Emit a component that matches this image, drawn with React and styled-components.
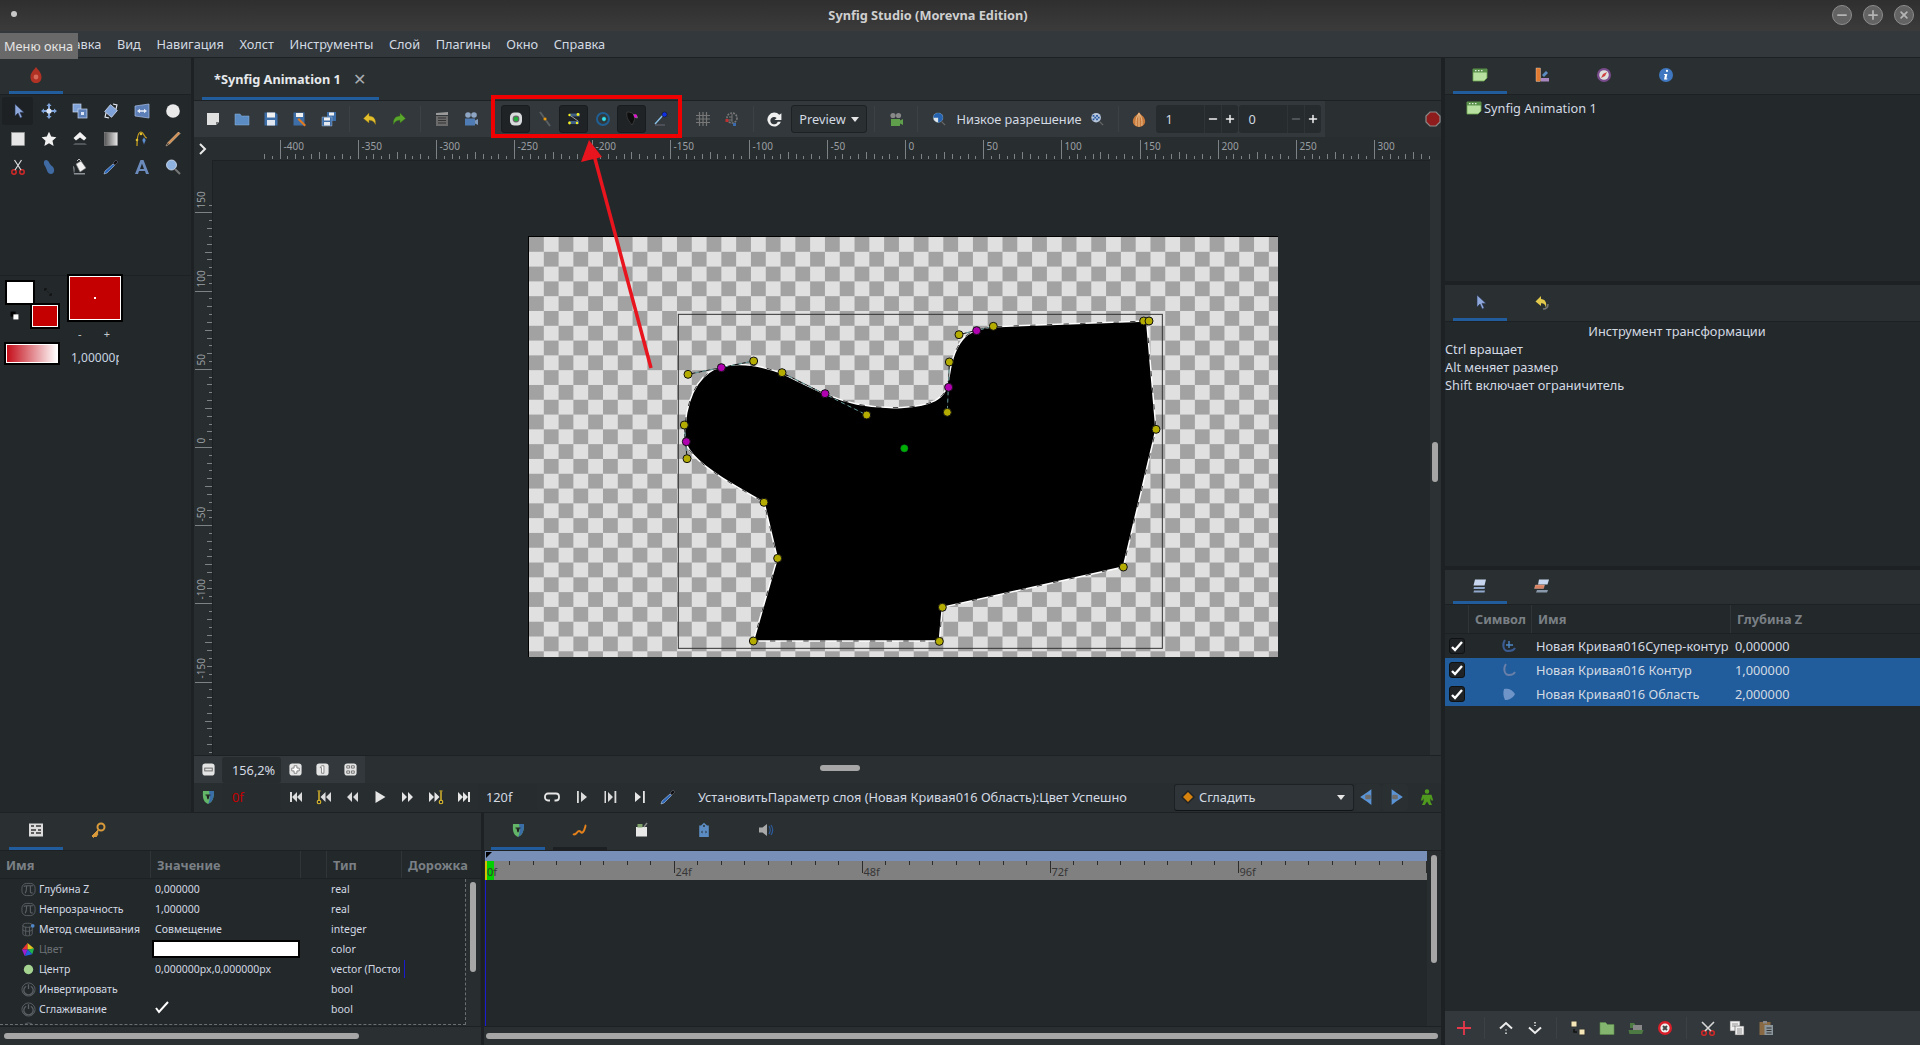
import React from "react";
import styled, { createGlobalStyle } from "styled-components";
import { Minus, Plus } from "lucide-react";

const GlobalStyle = createGlobalStyle`
  html, body { margin: 0; padding: 0; background: #1d2123; }
  * { box-sizing: border-box; }
`;

const ICONS = {
  pointer: <path d="M5 1v12l3-3 2.200 5 2-1-2.200-4.600H14z" fill="#8fa8dc" stroke="#26324f" strokeWidth=".6" />,
  move: <g fill="#7fa2d8"><path d="M8 0l2.600 3H9v3H7V3H5.400zM8 16l2.600-3H9v-3H7v3H5.400zM0 8l3-2.600V7h3v2H3v1.600zM16 8l-3-2.600V7h-3v2h3v1.600z" /><circle cx="8" cy="8" r="2.600" fill="#dbe5f4" /></g>,
  scale: <g><rect x="1" y="1" width="8" height="8" fill="#7fa2d8" stroke="#c7d6ee" strokeWidth=".7" /><rect x="6" y="6" width="9" height="9" fill="#5d7fb8" stroke="#c7d6ee" strokeWidth=".7" /><rect x="9" y="9" width="3" height="3" fill="#dbe5f4" /></g>,
  rotate: <g><rect x="3.500" y="3.500" width="9" height="9" transform="rotate(40 8 8)" fill="#7fa2d8" stroke="#dbe5f4" strokeWidth=".7" /><path d="M10 1l4 1-1 4M6 15l-4-1 1-4" fill="none" stroke="#e8edf5" strokeWidth="1.100" /></g>,
  mirror: <g><path d="M1 3l14-2v14L1 13z" fill="#5d7fb8" stroke="#a9bfe2" strokeWidth=".7" /><path d="M3 8l3-2.200v1.400h4V5.800L13 8l-3 2.200V8.800H6v1.400z" fill="#e8edf5" /></g>,
  disc: <circle cx="8" cy="8" r="6.800" fill="#eaeaea" />,
  square: <rect x="1.500" y="1.500" width="13" height="13" fill="#e6e6e6" stroke="#999" strokeWidth=".6" />,
  star: <path d="M8 .8l2.200 4.800 5.200.6-3.900 3.500 1.100 5.200L8 12.200 3.400 14.900l1.100-5.200L.6 6.200l5.200-.6z" fill="#f1f1f1" />,
  poly: <g><path d="M8 1l6.500 6-2.500 2.500-4-3-4 3L1.500 7z" fill="#f1f1f1" /><path d="M3 12h10l2 2H1z" fill="#50565a" /></g>,
  gradient: <g><defs><linearGradient id="sqg"><stop offset="0" stopColor="#555" /><stop offset="1" stopColor="#e8e8e8" /></linearGradient></defs><rect x="1.500" y="1.500" width="13" height="13" fill="url(#sqg)" stroke="#999" strokeWidth=".5" /></g>,
  spline: <g><path d="M3 15C3 6 4 1 7 1s3 6 6 6" fill="none" stroke="#c8a020" strokeWidth="1.200" /><path d="M8 9l2 5 2-5-2-3z" fill="#5b8fd0" stroke="#222" strokeWidth=".5" /><circle cx="3" cy="9" r="1.300" fill="#e0c030" /><circle cx="7" cy="3" r="1.300" fill="#e0c030" /></g>,
  pencil: <g><path d="M13.500 1l1.500 1.500L4.500 13 1 15l2-3.500z" fill="#d38a4a" stroke="#f0d8b8" strokeWidth=".6" /><path d="M3 12l-2 3 3-2z" fill="#333" /></g>,
  scissors: <g fill="none" stroke="#d02828" strokeWidth="1.500"><circle cx="4" cy="13" r="2.200" /><circle cx="12" cy="13" r="2.200" /><path d="M5 11L11.500 1M11 11L4.500 1" stroke="#ddd" strokeWidth="1.200" /></g>,
  width: <path d="M5 1c3 0 3 4 6 6 3 2 3 8-1 8-4 0-4-5-6-8C2 4 3 1 5 1z" fill="#3f6aa2" />,
  bucket: <g><path d="M4 5l5-3 5 7-6 4z" fill="#f0f0f0" stroke="#777" strokeWidth=".6" /><path d="M9 2L7 0 5 2" fill="none" stroke="#bbb" /><path d="M1 7c2 0 2 6 1 7h11v1.500H2z" fill="#8b9196" /></g>,
  dropper: <g><path d="M13 1l2 2-3 3-2-2z" fill="#101010" stroke="#88a" strokeWidth=".4" /><path d="M10 5l1.500 1.500L4 14l-3 1 1-3z" fill="#2c66b8" stroke="#cfe0f5" strokeWidth=".5" /></g>,
  letter: <path d="M6.500 1h3L15 15h-3l-1-3H5l-1 3H1zM8 4.500L6 10h4z" fill="#6b8bbd" fillRule="evenodd" />,
  magnifier: <g><circle cx="6.500" cy="6" r="5" fill="#8fb3e0" stroke="#d4e2f3" strokeWidth=".8" /><path d="M10 10l5 5" stroke="#777" strokeWidth="2" /></g>,
  flame: <g><path d="M8 0c3 4 5.500 6 5.500 10S11 16 8 16s-5.500-2-5.500-6S5 4 8 0z" fill="#b03224" /><circle cx="8" cy="10" r="2.400" fill="#d66a5a" /></g>,
  doc: <g><path d="M2 2h12v9l-3 3H2z" fill="#e0e0e0" /><path d="M14 11l-3 3v-3z" fill="#777" /></g>,
  open: <path d="M1 3h5l1.500 2H15v9H1z" fill="#5c8cc4" stroke="#8fb5e2" strokeWidth=".5" />,
  save: <g><path d="M1.500 1.500h11l2 2v11h-13z" fill="#3e6ea8" /><rect x="4" y="1.500" width="8" height="5" fill="#f1f1f1" /><rect x="4" y="9" width="8" height="5.500" fill="#dfe6ef" /></g>,
  saveAs: <g><path d="M1.500 1.500h11v13h-11z" fill="#3e6ea8" /><rect x="4" y="2" width="7" height="4" fill="#f1f1f1" /><path d="M7 7l7 7-1.500 1.500-7-7z" fill="#e07a20" /></g>,
  saveAll: <g><path d="M6 1h9v9H6z" fill="#3e6ea8" /><rect x="8" y="1.500" width="5" height="3" fill="#f1f1f1" /><path d="M1 6h10v9H1z" fill="#3e6ea8" stroke="#bcd" strokeWidth=".4" /><rect x="3" y="6.500" width="6" height="3" fill="#f1f1f1" /><rect x="3" y="11" width="6" height="3.500" fill="#e4e9f0" /></g>,
  undo: <path d="M7 2L1.500 7.500 7 12V9.200c3 0 5 1 6.500 4.300C14 8.500 12 5 7 5z" fill="#e2bd2c" stroke="#8d7412" strokeWidth=".4" />,
  redo: <path d="M9 2l5.500 5.500L9 12V9.200c-3 0-5 1-6.500 4.300C2 8.500 4 5 9 5z" fill="#5aa52c" stroke="#356b16" strokeWidth=".4" />,
  clapper: <g><rect x="2" y="5" width="12" height="10" fill="#6b6b6b" /><path d="M2 2l12-1v3H2z" fill="#9a9a9a" /><path d="M4 7h8M4 9.500h8M4 12h8" stroke="#333" strokeWidth="1" /></g>,
  camera: <g><circle cx="5" cy="4" r="2.800" fill="#8fa5c4" /><circle cx="11" cy="4" r="2.800" fill="#8fa5c4" /><rect x="2" y="7.500" width="10" height="7" fill="#4f7cb5" /><path d="M12 9.500l3-1.500v6l-3-1.500z" fill="#7f99bd" /></g>,
  eye: <g><rect x="2" y="1.500" width="12" height="13" rx="4.500" fill="#d8dadc" /><circle cx="8" cy="8" r="3.400" fill="#666" /><circle cx="8" cy="8" r="2.200" fill="#1fb03a" /></g>,
  nodes: <g><path d="M3 1l10 14" stroke="#5a5f62" strokeWidth="2" /><circle cx="8" cy="8" r="1.800" fill="#e89a10" stroke="#333" strokeWidth=".4" /></g>,
  ducks: <g><rect x="4" y="2.500" width="10" height="3" fill="#3f5f86" /><rect x="3" y="10" width="10" height="3" fill="#3f5f86" /><path d="M5 5l7 5" stroke="#999" /><circle cx="12" cy="3.500" r="1.400" fill="#f5f020" /><circle cx="3.500" cy="4" r="1.200" fill="#f5f020" /><circle cx="3.500" cy="12" r="1.400" fill="#f5f020" /><circle cx="11" cy="12" r="1.200" fill="#f5f020" /></g>,
  ring: <g><circle cx="8" cy="8" r="6" fill="none" stroke="#1f5f94" strokeWidth="2" /><circle cx="9" cy="8" r="2.400" fill="#35e0f0" stroke="#222" strokeWidth=".6" /></g>,
  tangent: <g><path d="M3 1c8 0 10 5 5 13C5 10 2 7 3 1z" fill="#0d0d0d" stroke="#555" strokeWidth=".5" /><path d="M9 3c3 0 5 2 5 4-2 1-4 0-5-4z" fill="#777" /><circle cx="11.500" cy="5" r="1.700" fill="#e010d0" /></g>,
  pin: <g><path d="M2 13L11 3" stroke="#88c0e8" strokeWidth="1.400" /><path d="M2 14h10" stroke="#667" /><circle cx="11.500" cy="3.500" r="2.500" fill="#1030e0" stroke="#111" strokeWidth=".5" /></g>,
  grid: <path d="M4.500 1v14M8 1v14M11.500 1v14M1 4.500h14M1 8h14M1 11.500h14" stroke="#777" strokeWidth="1.200" fill="none" />,
  gridSnap: <g><circle cx="8" cy="7" r="5" fill="none" stroke="#777" strokeWidth="1.600" strokeDasharray="2 1" /><path d="M5 6h3M5 9h3M8 3v8" stroke="#777" /><rect x="1.500" y="8" width="3" height="3" fill="#c03030" /><rect x="9" y="12" width="3" height="3" fill="#3a6ab0" /></g>,
  refresh: <path d="M12.500 3.500A6.500 6.500 0 1 0 14 10h-3a3.500 3.500 0 1 1-1-3.500L8 8.500h6.500V2z" fill="#f0f0f0" />,
  greenCam: <g><rect x="3" y="8" width="9" height="7" fill="#5f9e4a" /><path d="M12 9.500l3-1.500v6l-3-1.500z" fill="#5f9e4a" /><circle cx="5" cy="4.500" r="2.600" fill="#888" /><circle cx="10.500" cy="4.500" r="2.600" fill="#888" /></g>,
  lowres: <g><circle cx="7" cy="6.500" r="5.500" fill="#dfe5ee" stroke="#8aa" strokeWidth=".4" /><path d="M7 1a5.500 5.500 0 0 1 0 11zM1.500 6.500H7V1A5.500 5.500 0 0 0 1.500 6.500z" fill="#2563b0" /><path d="M11 11l4 4" stroke="#666" strokeWidth="1.600" /></g>,
  hires: <g><circle cx="7" cy="6.500" r="5.500" fill="#b8c6dc" /><path d="M3 3.500h2v2H3zM7 3.500h2v2H7zM5 5.500h2v2H5zM9 5.500h2v2H9zM3 7.500h2v2H3zM7 7.500h2v2H7z" fill="#2456a0" /><path d="M11 11l4 4" stroke="#666" strokeWidth="1.600" /></g>,
  onion: <g><path d="M8 1c0 3 5.500 4 5.500 9 0 3-2.500 5-5.500 5s-5.500-2-5.500-5C2.500 5 8 4 8 1z" fill="#c77a3c" /><path d="M8 3c-2 3-3 5-2.500 11M8 3c2 3 3 5 2.500 11M8 3v12" fill="none" stroke="#f0c89a" strokeWidth=".8" /></g>,
  stop: <path d="M5 1h6l4 4v6l-4 4H5l-4-4V5z" fill="#8e1c1c" stroke="#8a8a8a" strokeWidth="1.200" />,
  zoomOut: <g><rect x="1.500" y="1.500" width="13" height="13" rx="3" fill="#e4e4e4" /><rect x="4" y="6.500" width="8" height="3" fill="none" stroke="#666" /></g>,
  zoomIn: <g><rect x="1.500" y="1.500" width="13" height="13" rx="3" fill="#e4e4e4" /><path d="M6.500 4h3v2.500H12v3H9.500V12h-3V9.500H4v-3h2.500z" fill="#fff" stroke="#666" strokeWidth=".8" /></g>,
  zoomOne: <g><rect x="1.500" y="1.500" width="13" height="13" rx="3" fill="#e4e4e4" /><path d="M7 4h2.500v8H7V6H5.500z" fill="#fff" stroke="#666" strokeWidth=".8" /></g>,
  zoomFit: <g><rect x="1.500" y="1.500" width="13" height="13" rx="3" fill="#e4e4e4" /><path d="M4 4h3v2.500H4zM9 4h3v2.500H9zM4 9.500h3V12H4zM9 9.500h3V12H9z" fill="none" stroke="#666" strokeWidth=".9" /></g>,
  shield: <g><path d="M3 2h11c0 6-1 11-6 13C3 13 2.500 8 3 2z" fill="#63b568" /><path d="M9 2h5c0 6-1 11-6 13 2-3 2-8 1-13z" fill="#3a6ea8" /><path d="M5.500 6h5M7 6l1 4 1-4" stroke="#222" strokeWidth="1.200" fill="none" /></g>,
  seekBegin: <path d="M2 3h2v10H2zM9 3v10L4 8zM14 3v10L9 8z" fill="#dcdcdc" />,
  prevKey: <g><path d="M9.500 3v10l-5-5zM15 3v10l-5-5z" fill="#dcdcdc" /><path d="M3 2.500v9" stroke="#e2bd2c" strokeWidth="1.400" /><circle cx="3" cy="13" r="1.800" fill="none" stroke="#e2bd2c" strokeWidth="1.100" /><path d="M1.500 2h3" stroke="#e2bd2c" /></g>,
  prevFrame: <path d="M8 3v10L3 8zM14 3v10L9 8z" fill="#dcdcdc" />,
  play: <path d="M3.500 2l10 6-10 6z" fill="#e6e6e6" />,
  nextFrame: <path d="M2 3v10l5-5zM8 3v10l5-5z" fill="#e6e6e6" />,
  nextKey: <g><path d="M1 3v10l5-5zM6.500 3v10l5-5z" fill="#e6e6e6" /><path d="M13 2.500v9" stroke="#e2bd2c" strokeWidth="1.400" /><circle cx="13" cy="13" r="1.800" fill="none" stroke="#e2bd2c" strokeWidth="1.100" /><path d="M11.500 2h3" stroke="#e2bd2c" /></g>,
  seekEnd: <path d="M2 3v10l5-5zM7 3v10l5-5zM12 3h2v10h-2z" fill="#e6e6e6" />,
  loop: <path d="M4 4.500h8a3 3 0 0 1 3 3v1a3 3 0 0 1-3 3h-1.500M6 11.500H4a3 3 0 0 1-3-3v-1a3 3 0 0 1 3-3" fill="none" stroke="#e6e6e6" strokeWidth="1.800" />,
  boundLeft: <path d="M3 2h1.800v12H3zM7 3v10l6-5z" fill="#dcdcdc" />,
  boundBoth: <path d="M1.500 2h1.500v12H1.500zM5 3v10l5-5zM11.500 2h1.800v12h-1.800z" fill="#dcdcdc" />,
  boundRight: <path d="M3 3v10l6-5zM11 2h1.800v12H11z" fill="#e6e6e6" />,
  diamond: <g><path d="M8 1l7 7-7 7-7-7z" fill="#222" /><path d="M8 3l5 5-5 5-5-5z" fill="#d6820f" /></g>,
  waypointL: <g><path d="M11 1v14L7 12 1 8l6-4z" fill="#5a94d6" /><rect x="5.500" y="6" width="5" height="4" rx="1" fill="#6e6e6e" /></g>,
  waypointR: <g><path d="M5 1v14l4-3 6-4-6-4z" fill="#5a94d6" /><rect x="5.500" y="6" width="5" height="4" rx="1" fill="#6e6e6e" /></g>,
  runner: <path d="M8 1a2 2 0 1 1 0 4 2 2 0 0 1 0-4zM4 6h8l1.500 5H12l-1-2v3l1.500 3H10L8 12l-2 3H3.500L5 12V9l-1 2H2.500z" fill="#4f9a1e" />,
  curves: <path d="M1 12c3 2 4-3 6-3s2 3 4 1 2-6 3-7" fill="none" stroke="#e2801c" strokeWidth="2" />,
  paramsTab: <g><rect x="1" y="1.500" width="14" height="13" fill="#dcdcdc" /><path d="M3 4h3M8 4h5M3 8h5M10 8h3M3 11h3M8 11h5" stroke="#333" strokeWidth="1.400" /></g>,
  key: <g><circle cx="11" cy="5" r="3.500" fill="none" stroke="#d89a3a" strokeWidth="2" /><path d="M8.500 7.500L2 14l1.500 1.500 1.500-1.500 1 1 2-3" fill="#d89a3a" stroke="#d89a3a" /></g>,
  library: <g><rect x="2" y="5" width="11" height="9.500" fill="#e8e8e8" /><rect x="3.500" y="2" width="5" height="3.500" fill="#7fa36a" /><path d="M10 5l3-4" stroke="#888" strokeWidth="1.400" /></g>,
  tag: <path d="M8 .8l3 2.700h1.800V15H3.200V3.500H5zM8 3a1 1 0 1 0 0 2 1 1 0 0 0 0-2zM6.500 8.500L5 10l1.500 1.500M9.500 8.500L11 10l-1.500 1.500" fill="#5c8cc4" fillRule="evenodd" />,
  speaker: <g><path d="M1 5.500h3.500L9 2v12l-4.500-3.500H1z" fill="#a8a8a8" /><path d="M11 4c1.500 2.500 1.500 5.500 0 8M13 3c2 3 2 7 0 10" fill="none" stroke="#2c5a9a" strokeWidth="1.200" /></g>,
  canvasTab: <g><path d="M1 2h14v9l-3 3H1z" fill="#b8e0a0" stroke="#6aa84f" strokeWidth=".8" /><rect x="1" y="2" width="14" height="3.500" fill="#59914a" /><path d="M3 3.700h1.500M6 3.700h1.500M9 3.700h1.500" stroke="#fff" /></g>,
  palette: <g><rect x="2" y="1" width="4.500" height="13.500" fill="#e07a30" stroke="#fff" strokeWidth=".3" /><path d="M8 8l4-4 2 2-4 4z" fill="#5c8cc4" /><rect x="7" y="11" width="8" height="3.500" fill="#a886c0" /></g>,
  compass: <g><circle cx="8" cy="8" r="7" fill="#7a4b8c" /><circle cx="8" cy="8" r="4.800" fill="#ddd" /><path d="M11 5L9 9 5 11l2-4z" fill="#d04040" /></g>,
  info: <g><circle cx="8" cy="8" r="7" fill="#3f78c0" /><path d="M9 2.800a1.100 1.100 0 1 1-.1 2.200 1.100 1.100 0 0 1 .1-2.200zM6.200 7h3.200l-1 4.500h1.100l-.3 1H6l1-4.500H6z" fill="#fff" /></g>,
  history: <g><path d="M7 2L1.500 7.500 7 12V9.200c3 0 4 1 5 4.300C13 8.500 11 5 7 5z" fill="#e2c94c" /><path d="M9 15c3 0 5-1.500 5-5" fill="none" stroke="#777" strokeWidth="1.500" /></g>,
  layersTab: <g><path d="M3 1.500h11l-1.500 6H1.500z" fill="#c7d6ee" /><path d="M2 9h11l-.5 2H1.500zM2 12.500h11l-.5 2H1.500z" fill="#8fa8cc" /></g>,
  setsTab: <g><path d="M5 1.500h10l-1.500 5H4z" fill="#c7d6ee" /><path d="M1.500 7h9l-1 3.500h-9z" fill="#d98060" stroke="#eba" strokeWidth=".4" /><path d="M3 12h11l-1 2.500H2z" fill="#8a98ac" /></g>,
  pi: <g fill="none" stroke="#5a6064" strokeWidth="1"><rect x="1" y="1.500" width="14" height="13" rx="5" /><path d="M3 5c1-1.200 2-1 4-1h6M6 4.500c0 4-.5 6-1.500 7.500M10 4.500v5.500c0 1.500 1 2 2.500 1.500" strokeWidth="1.200" /></g>,
  blend: <g fill="none" stroke="#5a6064"><ellipse cx="7" cy="3.500" rx="5" ry="2.200" /><path d="M2 3.500v9c0 3 10 3 10 0v-9M2 8c0 2.500 10 2.500 10 0M5 5v9M9 5v9" /><circle cx="12.500" cy="4" r="2" fill="#4f86c6" stroke="none" /></g>,
  wheel: <g><path d="M1 8L7 1v7z" fill="#e83030" /><path d="M7 1l7 6-7 1z" fill="#e0c020" /><path d="M14 7l-2 6-5-5z" fill="#20b050" /><path d="M12 13l-8 2 3-7z" fill="#2060e0" /><path d="M4 15l-3-7h6z" fill="#a020d0" /></g>,
  dotGreen: <circle cx="8" cy="8" r="5" fill="#a4d490" />,
  power: <g fill="none" stroke="#5a6064"><circle cx="8" cy="8" r="7" /><path d="M5.500 4.500a5 5 0 1 0 5 0M8 2.500v5" strokeWidth="1.400" /></g>,
  outlineSym: <g><path d="M4 2C1 6 2 13 7 13c3 0 6-1 7-3" fill="none" stroke="#3a5c92" strokeWidth="2" /><path d="M8 3v7M5 7h7" stroke="#4f86c6" strokeWidth="1.400" /></g>,
  contourSym: <path d="M5 2C2 6 3 13 8 13c3 0 5-1 6-3" fill="none" stroke="#6a80a8" strokeWidth="1.800" />,
  areaSym: <path d="M3 3c4-1 8 0 11 5-2 4-6 6-10 6C2 10 2 6 3 3z" fill="#6f94c8" />,
  plusRed: <path d="M8 1v14M1 8h14" stroke="#e8384a" strokeWidth="1.800" />,
  up: <g fill="none" stroke="#ececec"><path d="M2 8.500L8 3l6 5.500" strokeWidth="2" /><path d="M8 9.500v1M8 12.500v1.500" strokeWidth="1.500" /></g>,
  down: <g fill="none" stroke="#ececec"><path d="M2 7.500L8 13l6-5.500" strokeWidth="2" /><path d="M8 2v1.500M8 5v1" strokeWidth="1.500" /></g>,
  encap: <g><rect x="1" y="1" width="6" height="6" fill="#f5e6b8" stroke="#333" /><rect x="9" y="9" width="6" height="6" fill="#f5e6b8" stroke="#333" /><path d="M4 9v3h3" fill="none" stroke="#111" strokeWidth="1.500" /></g>,
  swapColors: <path d="M1 1h4v2H3v2H1zM15 15h-4v-2h2v-2h2zM6 6l4 4" fill="#111" stroke="#111" />,
  resetColors: <g><rect x="1" y="1" width="9" height="9" fill="#000" /><rect x="6" y="6" width="9" height="9" fill="#fff" /></g>,
  folder: <path d="M1 2.500h5.500l2 2H15v10H1z" fill="#83b56f" stroke="#5a8b48" strokeWidth=".6" />,
  folderGo: <g><path d="M2 3h4l1.500 2H14v3H2z" fill="#4d7a42" /><rect x="5" y="5" width="9" height="6" fill="#888" /><path d="M0.500 10h15L14 14H1.500z" fill="#4d7a42" /></g>,
  del: <g><circle cx="8" cy="8" r="7" fill="#d81f2a" /><circle cx="8" cy="8" r="4.600" fill="#eee" /><path d="M6 6l4 4M10 6l-4 4" stroke="#444" strokeWidth="2" /></g>,
  cutSmall: <g fill="none"><circle cx="4" cy="13" r="2.300" stroke="#d02828" strokeWidth="1.600" /><circle cx="12" cy="13" r="2.300" stroke="#d02828" strokeWidth="1.600" /><path d="M5 11L14 2M11 11L2 2" stroke="#d8d8d8" strokeWidth="1.600" /></g>,
  copy: <g stroke="#555" strokeWidth=".6"><rect x="1" y="1" width="10" height="10" fill="#f0f0f0" /><rect x="6" y="6" width="9" height="9" fill="#f0f0f0" /><path d="M3 4h6M3 6h3M8 9h5M8 11h5M8 13h5" /></g>,
  paste: <g><rect x="1.500" y="2" width="11" height="13" fill="#8a6a44" /><rect x="5" y="1" width="4" height="2.500" fill="#888" /><rect x="6.500" y="5" width="8.500" height="10" fill="#8a959c" /><path d="M8.500 8h5M8.500 10.500h5M8.500 13h5" stroke="#333" /></g>,
};

const Icon = ({ name, size = 16 }) => (
  <svg width={size} height={size} viewBox="0 0 16 16">{ICONS[name]}</svg>
);

const Page = styled.div`
  position: relative;
  width: 1920px;
  height: 1045px;
  overflow: hidden;
  display: flex;
  flex-direction: column;
  background: #1d2123;
  color: #d3dae3;
  font: 12.75px "Noto Sans", sans-serif;
`;

const TitleBar = styled.header`
  height: 31px;
  display: flex;
  align-items: center;
  justify-content: center;
  position: relative;
  padding: 0 64px 1px 0;
  background: linear-gradient(#2f2f2f, #3b3b3b);
  color: #cfcfcf;
  font-weight: 700;
`;

const WindowDot = styled.span`
  position: absolute;
  left: 11px;
  top: 11px;
  width: 6px;
  height: 6px;
  border-radius: 50%;
  background: #c8c8c8;
`;

const WindowButtons = styled.div`
  position: absolute;
  right: 6px;
  top: 5px;
  display: flex;
  gap: 11px;
`;

const WindowButton = styled.button`
  width: 20px;
  height: 20px;
  padding: 0;
  border-radius: 50%;
  border: 1px solid #8d8d8d;
  background: #636363;
  color: #b4b4b4;
  display: flex;
  align-items: center;
  justify-content: center;
`;

const MenuBar = styled.nav`
  height: 27px;
  display: flex;
  align-items: center;
  background: #32383b;
  border-bottom: 1px solid #1d2123;
`;

const MenuItem = styled.span`
  padding: 0 7.800px;
  color: #d3dae3;
`;

const Tooltip = styled.div`
  position: absolute;
  left: 0;
  top: 33px;
  width: 78px;
  height: 26px;
  padding: 4px 0 0 4px;
  background: #696969;
  color: #e4e4e4;
`;

const Body = styled.main`
  flex: 1;
  min-height: 0;
  display: flex;
  gap: 4px;
`;

const LeftArea = styled.div`
  width: 1441px;
  display: flex;
  flex-direction: column;
`;

const TopRow = styled.div`
  height: 754px;
  display: flex;
  gap: 3px;
`;

const BottomRow = styled.div`
  flex: 1;
  min-height: 0;
  display: flex;
  gap: 3px;
  border-top: 1px solid #1d2123;
`;

const RightArea = styled.aside`
  flex: 1;
  display: flex;
  flex-direction: column;
`;

const Toolbox = styled.section`
  width: 191px;
  display: flex;
  flex-direction: column;
  background: #23282b;
`;

const TabBar = styled.div`
  flex: none;
  height: ${(p) => p.$h || 37}px;
  padding-left: ${(p) => p.$pad || 9}px;
  display: flex;
  gap: 8px;
  background: #2a3032;
  border-bottom: 1px solid #1d2123;
`;

const Tab = styled.div`
  width: 54px;
  display: flex;
  align-items: center;
  justify-content: center;
  border-bottom: 3px solid ${(p) => (p.$active ? "#215d9c" : p.$dark ? "#1c2022" : "transparent")};
`;

const DocTab = styled(Tab)`
  width: 177px;
  justify-content: flex-start;
  gap: 12px;
  padding: 2px 0 0 12px;
  color: #e6e9ec;
  font-weight: 700;
`;

const CloseMark = styled.span`
  color: #a9adb1;
  font-weight: 400;
  font-size: 16px;
  line-height: 1;
`;

const ToolGrid = styled.div`
  display: grid;
  grid-template-columns: repeat(6, 31px);
  grid-auto-rows: 28px;
  padding: 2px 0 0 2px;
`;

const ToolCell = styled.div`
  display: flex;
  align-items: center;
  justify-content: center;
  border-radius: 3px;
  background: ${(p) => (p.$active ? "#1d2123" : "transparent")};
`;

const ColorPanel = styled.div`
  margin-top: 94px;
  padding: 2px 0 0 5px;
  border-top: 1px solid #1d2123;
`;

const ColorRow = styled.div`
  display: flex;
  gap: 8px;
`;

const SwatchStack = styled.div`
  position: relative;
  width: 54px;
  height: 62px;
`;

const Swatch = styled.div`
  position: absolute;
  left: ${(p) => p.$x || 0}px;
  top: ${(p) => p.$y || 0}px;
  width: ${(p) => p.$w}px;
  height: ${(p) => p.$h}px;
  background: ${(p) => p.$color};
  border: 1px solid #fff;
  outline: 2px solid #000;
  margin: 2px;
`;

const BigSwatch = styled(Swatch)`
  position: static;
  margin: -2px 2px 2px;
  display: flex;
  align-items: center;
  justify-content: center;
`;

const StackIcon = styled.span`
  position: absolute;
  left: ${(p) => p.$x}px;
  top: ${(p) => p.$y}px;
  line-height: 0;
`;

const CenterDot = styled.span`
  width: 2px;
  height: 2px;
  background: #fff;
`;

const SizeSteps = styled.div`
  display: flex;
  justify-content: space-around;
  padding: 6px 6px 0 0;
  width: 60px;
  color: #c4c9cd;
  font-size: 11px;
  line-height: 12px;
`;

const BrushRow = styled.div`
  display: flex;
  align-items: center;
  gap: 11px;
`;

const BrushGradient = styled(Swatch)`
  position: static;
  margin: 2px 2px 2px 1px;
  background: linear-gradient(90deg, #c40e1a, #fff);
`;

const BrushSize = styled.span`
  width: 48px;
  margin-top: 9px;
  overflow: hidden;
  white-space: nowrap;
  color: #c8d4e0;
  font-size: 12px;
`;

const CanvasPanel = styled.section`
  flex: 1;
  min-width: 0;
  display: flex;
  flex-direction: column;
  background: #2a2f31;
`;

const ToolbarRow = styled.div`
  flex: none;
  height: 36px;
  display: flex;
  background: #2a2f31;
`;

const Toolbar = styled.div`
  width: 1131px;
  display: flex;
  align-items: center;
  padding-left: 4px;
  background: #32383b;
`;

const ToolButton = styled.div`
  flex: none;
  width: ${(p) => p.$w || 29}px;
  height: 28px;
  display: flex;
  align-items: center;
  justify-content: center;
  border-radius: 3px;
  background: ${(p) => (p.$active ? "#1f2326" : "transparent")};
  border: ${(p) => (p.$active ? "1px solid #191c1e" : "none")};
`;

const ToolGap = styled.span`
  flex: none;
  width: ${(p) => p.$w}px;
  height: 26px;
  display: flex;
  justify-content: center;
  &::after {
    content: "";
    width: 1px;
    background: #3b4245;
  }
`;

const PreviewButton = styled.div`
  flex: none;
  margin-left: 3px;
  width: 76px;
  height: 28px;
  display: flex;
  align-items: center;
  justify-content: center;
  gap: 5px;
  background: #2a2f31;
  border: 1px solid #1d2123;
  border-radius: 3px;
`;

const Caret = styled.span`
  width: 0;
  height: 0;
  border-left: 4.5px solid transparent;
  border-right: 4.5px solid transparent;
  border-top: 5px solid #e6e6e6;
`;

const ResolutionLabel = styled.span`
  flex: none;
  width: 126px;
  margin-left: 3px;
  white-space: nowrap;
`;

const SpinBox = styled.div`
  flex: none;
  margin-left: ${(p) => p.$ml || 1}px;
  width: 82px;
  height: 28px;
  display: grid;
  grid-template-columns: 1fr 17px 17px;
  align-items: center;
  border-radius: 3px;
  background: #262b2e;
  padding-left: 10px;
`;

const SpinStep = styled.span`
  display: flex;
  align-items: center;
  justify-content: center;
  height: 100%;
  border-left: 1px solid #2f3437;
  color: ${(p) => (p.$dim ? "#5c6266" : "#f0f0f0")};
`;

const RecordSlot = styled.div`
  flex: 1;
  display: flex;
  align-items: center;
  justify-content: flex-end;
  padding-right: 0;
`;

const RulerRow = styled.div`
  flex: none;
  height: 23px;
  display: flex;
  background: #282d2f;
`;

const RulerCorner = styled.div`
  width: 18px;
  display: flex;
  align-items: center;
  justify-content: center;
  line-height: 0;
`;

const RulerLabel = styled.text`
  font: 10px "Noto Sans", sans-serif;
  fill: #9a9fa3;
`;

const CanvasRow = styled.div`
  flex: none;
  height: 595px;
  display: flex;
`;

const SideRuler = styled.div`
  width: 18px;
  line-height: 0;
  background: #282d2f;
`;

const Viewport = styled.div`
  position: relative;
  width: 1218px;
  background: #23282b;
  border-top: 1px solid #1d2123;
  border-left: 1px solid #1d2123;
  overflow: hidden;
`;

const Artboard = styled.div`
  position: absolute;
  left: 315px;
  top: 75px;
  width: 750px;
  height: 421px;
  border-left: 1px solid #000;
  border-top: 1px solid #000;
  background-color: #e0e0e0;
  background-image: repeating-conic-gradient(#a2a2a2 0 25%, #e0e0e0 0 50%);
  background-size: 29.600px 29.600px;
  background-position: 14.800px 0;
`;

const ShapeLayer = styled.svg`
  position: absolute;
  left: 447px;
  top: 139px;
  width: 520px;
  height: 370px;
`;

const VScroll = styled.div`
  flex: none;
  width: ${(p) => p.$w || 10}px;
  display: flex;
  justify-content: center;
  padding-top: ${(p) => p.$top}px;
  background: ${(p) => p.$bg || "#2c3134"};
`;

const Thumb = styled.span`
  display: block;
  width: ${(p) => p.$w || 6}px;
  height: ${(p) => p.$h || 6}px;
  background: #a6a6a6;
  border-radius: 3px;
`;

const ZoomRow = styled.div`
  flex: none;
  height: 28px;
  display: flex;
  border-top: 1px solid #1d2123;
  background: #2a2f31;
`;

const ZoomGroup = styled.div`
  width: 171px;
  display: flex;
  align-items: center;
  background: #32383b;
`;

const SmallButton = styled.div`
  flex: none;
  width: ${(p) => p.$w || 28}px;
  display: flex;
  align-items: center;
  justify-content: center;
`;

const Field = styled.div`
  flex: none;
  width: 59px;
  height: 26px;
  display: flex;
  align-items: center;
  padding-left: ${(p) => p.$pad || 10}px;
  background: #272c2f;
  border-radius: 3px;
  color: ${(p) => p.$color || "#d3dae3"};
`;

const ScrollTrack = styled.div`
  flex: 1;
  padding: 9px 0 0 455px;
`;

const TransportRow = styled.div`
  flex: 1;
  display: flex;
  align-items: center;
  background: #282d30;
  padding-bottom: 1px;
`;

const StatusText = styled.span`
  flex: 1;
  margin-left: 17px;
  white-space: nowrap;
`;

const InterpSelect = styled.div`
  flex: none;
  width: 180px;
  height: 27px;
  display: flex;
  align-items: center;
  gap: 3px;
  padding: 0 8px 0 5px;
  background: #2f3538;
  border: 1px solid #1d2123;
  border-bottom-color: #111416;
  border-radius: 3px;
`;

const InterpName = styled.span`
  flex: 1;
`;

const WaypointButton = styled(SmallButton)`
  width: 26px;
  height: 27px;
  margin-left: 1px;
  background: #2a2f31;
  border-radius: 3px;
`;

const RunnerSlot = styled(SmallButton)`
  margin-left: 5px;
`;

const ParamsPanel = styled.section`
  width: 481px;
  display: flex;
  flex-direction: column;
  background: #23282b;
`;

const ColumnHeader = styled.div`
  flex: none;
  height: ${(p) => p.$h || 29}px;
  display: grid;
  grid-template-columns: ${(p) => p.$cols};
  border-bottom: 1px solid #1d2123;
  background: #23282b;
  color: #7a8085;
  font-weight: 700;
`;

const HeaderCell = styled.div`
  display: flex;
  align-items: center;
  padding-left: 6px;
  white-space: nowrap;
  border-left: ${(p) => (p.$first ? "none" : "1px solid #2f3538")};
`;

const ParamsBody = styled.div`
  flex: 1;
  min-height: 0;
  display: flex;
`;

const ParamRows = styled.div`
  width: 466px;
  height: 146px;
  overflow: hidden;
  border-right: 1px dashed #6a6f72;
  border-bottom: 1px dashed #6a6f72;
  font-size: 10.5px;
`;

const ParamRow = styled.div`
  height: 20px;
  display: grid;
  grid-template-columns: 155px 176px 69px 1fr;
  align-items: center;
`;

const ParamName = styled.div`
  display: flex;
  align-items: center;
  gap: 3px;
  padding-left: 21px;
  line-height: 0;
  color: ${(p) => (p.$dim ? "#6c7175" : "#d3dae3")};
  & > span {
    line-height: 14px;
  }
`;

const ParamType = styled.div`
  overflow: hidden;
  white-space: nowrap;
`;

const ColorValue = styled.div`
  width: 148px;
  height: 18px;
  margin-left: -3px;
  background: #fff;
  border: 2px solid #000;
`;

const TrackMark = styled.span`
  display: block;
  width: 1px;
  height: 18px;
  margin-left: 4px;
  background: #1a1ad0;
`;

const BottomScroll = styled.div`
  flex: none;
  height: 19px;
  display: flex;
  align-items: center;
  padding-left: ${(p) => p.$pad}px;
  background: #2a2f31;
  border-top: 1px solid #1d2123;
`;

const TimePanel = styled.section`
  flex: 1;
  min-width: 0;
  display: flex;
  flex-direction: column;
  background: #23282b;
`;

const TimeMain = styled.div`
  flex: 1;
  min-height: 0;
  display: flex;
`;

const TimeColumn = styled.div`
  flex: 1;
  min-width: 0;
  margin-left: 1px;
  display: flex;
  flex-direction: column;
`;

const BlueBand = styled.div`
  position: relative;
  height: 10px;
  background: #7890b8;
  &::before {
    content: "";
    position: absolute;
    left: 1px;
    top: 1px;
    border-top: 6px solid #000;
    border-right: 6px solid transparent;
  }
`;

const GrayBand = styled.div`
  position: relative;
  height: 19px;
  background: #808080;
  line-height: 0;
`;

const CurrentFrame = styled.div`
  position: absolute;
  left: 0;
  top: 0;
  width: 9px;
  height: 19px;
  background: #00d000;
  border-left: 2px solid #d4c000;
`;

const TickLayer = styled.svg`
  position: absolute;
  left: 0;
  top: 0;
`;

const FrameLabel = styled.text`
  font: 11px "Noto Sans", sans-serif;
  fill: #363636;
`;

const TrackArea = styled.div`
  flex: 1;
  border-left: 1px solid #1a1ad0;
`;

const PanelGroup = styled.section`
  flex: ${(p) => (p.$h ? "none" : 1)};
  height: ${(p) => (p.$h ? `${p.$h}px` : "auto")};
  min-height: 0;
  display: flex;
  flex-direction: column;
  background: #23282b;
  border-bottom: ${(p) => (p.$sep ? "4px solid #1d2123" : "none")};
`;

const TreeRow = styled.div`
  display: flex;
  align-items: center;
  gap: 2px;
  padding: 4px 0 0 21px;
  color: #d3dae3;
`;

const ToolHelp = styled.div`
  line-height: 18px;
`;

const HelpTitle = styled.div`
  text-align: center;
  padding-right: 11px;
`;

const LayerRow = styled.div`
  height: 24px;
  display: grid;
  grid-template-columns: 23px 63px 199px 1fr;
  align-items: center;
  background: ${(p) => (p.$selected ? "#215d9c" : "transparent")};
`;

const CheckBox = styled.span`
  width: 16px;
  height: 16px;
  margin-left: 4px;
  display: flex;
  align-items: center;
  justify-content: center;
  border-radius: 3px;
  background: #1f2325;
  border: 1px solid #0f1112;
`;

const LayerSymbol = styled.span`
  display: flex;
  justify-content: center;
  padding-left: 18px;
`;

const LayerCell = styled.span`
  padding-left: 5px;
  white-space: nowrap;
`;

const Spacer = styled.div`
  flex: 1;
`;

const LayerToolbar = styled.div`
  flex: none;
  height: 34px;
  display: flex;
  align-items: center;
  padding-left: 4px;
  background: #32383b;
`;

const LayerButton = styled.div`
  flex: none;
  width: 29px;
  display: flex;
  align-items: center;
  justify-content: center;
`;

const LayerGap = styled(ToolGap)`
  height: 22px;
`;

const Overlay = styled.svg`
  position: absolute;
  left: 0;
  top: 0;
  pointer-events: none;
`;

const MENU = ["Файл", "Правка", "Вид", "Навигация", "Холст", "Инструменты", "Слой", "Плагины", "Окно", "Справка"];

const TOOLS = [
  "pointer", "move", "scale", "rotate", "mirror", "disc",
  "square", "star", "poly", "gradient", "spline", "pencil",
  "scissors", "width", "bucket", "dropper", "letter", "magnifier",
];

const PARAMS = [
  { icon: "pi", name: "Глубина Z", value: "0,000000", type: "real" },
  { icon: "pi", name: "Непрозрачность", value: "1,000000", type: "real" },
  { icon: "blend", name: "Метод смешивания", value: "Совмещение", type: "integer" },
  { icon: "wheel", name: "Цвет", dim: true, color: true, type: "color" },
  { icon: "dotGreen", name: "Центр", value: "0,000000px,0,000000px", type: "vector (Постоянная)", track: true },
  { icon: "power", name: "Инвертировать", value: "", type: "bool" },
  { icon: "power", name: "Сглаживание", check: true, type: "bool" },
  { icon: "power", name: "", value: "", type: "" },
];

const LAYERS = [
  { icon: "outlineSym", name: "Новая Кривая016Супер-контур", z: "0,000000" },
  { icon: "contourSym", name: "Новая Кривая016 Контур", z: "1,000000", selected: true },
  { icon: "areaSym", name: "Новая Кривая016 Область", z: "2,000000", selected: true },
];

const YELLOW = [
  [84, 223], [281, 183], [366, 218], [620, 345], [897, 104], [868, 186], [1000, 79], [1451, 63], [1467, 63],
  [1488, 388], [1390, 801], [847, 922], [838, 1024], [280, 1023], [353, 775], [312, 607], [81, 476], [73, 375], [862, 337],
];
const MAGENTA = [[184, 203], [495, 281], [950, 92], [866, 262], [79, 425]];
const HANDLES = [
  [84, 223, 281, 183], [366, 218, 620, 345], [897, 104, 1000, 79], [868, 186, 862, 337], [73, 375, 81, 476],
];
const OUTLINE =
  "M280 1023 L838 1023 L847 922 L1390 801 L1488 388 L1460 63 L1000 80 C960 85 930 95 915 110 C890 135 875 175 868 225 C862 265 855 285 825 302 C780 325 680 330 590 312 C520 298 470 270 366 220 C300 195 240 185 185 200 C130 212 85 270 75 375 C70 420 78 440 100 465 C140 510 220 555 312 607 L352 775 Z";

function TopRuler() {
  const ticks = [];
  for (let v = -410; v <= 335; v += 5) {
    const x = Math.round(693 + 1.5636 * v) + 0.5;
    const major = v % 50 === 0;
    const h = major ? 19 : v % 25 === 0 ? 7 : v % 10 === 0 ? 5 : 3;
    ticks.push(<line key={v} x1={x} x2={x} y1={22 - h} y2={22} stroke="#7d8286" />);
    if (major) ticks.push(<RulerLabel key={`l${v}`} x={x + 3} y={13}>{v}</RulerLabel>);
  }
  return <svg width="1228" height="23">{ticks}</svg>;
}

function LeftRuler() {
  const ticks = [];
  for (let v = 155; v >= -195; v -= 5) {
    const y = Math.round(287 - 1.5636 * v) + 0.5;
    const major = v % 50 === 0;
    const w = major ? 17 : v % 25 === 0 ? 7 : v % 10 === 0 ? 5 : 3;
    ticks.push(<line key={v} x1={18 - w} x2={18} y1={y} y2={y} stroke="#7d8286" />);
    if (major) {
      ticks.push(
        <RulerLabel key={`l${v}`} transform={`translate(11 ${y - 4}) rotate(-90)`}>{v}</RulerLabel>
      );
    }
  }
  return <svg width="18" height="595">{ticks}</svg>;
}

function TimeTicks() {
  const ticks = [];
  for (let f = 3; f <= 120; f += 3) {
    const x = Math.round(1 + 7.83 * f) + 0.5;
    const major = f % 24 === 0;
    ticks.push(<line key={f} x1={x} x2={x} y1={0} y2={major ? 12 : 4} stroke="#2c2c2c" />);
    if (major) ticks.push(<FrameLabel key={`l${f}`} x={x + 1} y={15}>{f}f</FrameLabel>);
  }
  return (
    <TickLayer width="942" height="19">
      {ticks}
      <FrameLabel x={2} y={15}>0f</FrameLabel>
    </TickLayer>
  );
}

function ToolIcons({ names, active = [], size }) {
  return names.map((n) => (
    <ToolButton key={n} $active={active.includes(n)}><Icon name={n} size={size} /></ToolButton>
  ));
}

export default function App() {
  return (
    <Page>
      <GlobalStyle />
      <TitleBar>
        <WindowDot />
        Synfig Studio (Morevna Edition)
        <WindowButtons>
          <WindowButton><Minus size={14} strokeWidth={3} /></WindowButton>
          <WindowButton><Plus size={14} strokeWidth={3} /></WindowButton>
          <WindowButton><Plus size={14} strokeWidth={3} transform="rotate(45)" /></WindowButton>
        </WindowButtons>
      </TitleBar>
      <MenuBar>
        {MENU.map((m) => <MenuItem key={m}>{m}</MenuItem>)}
      </MenuBar>

      <Body>
        <LeftArea>
          <TopRow>
            <Toolbox>
              <TabBar>
                <Tab $active><Icon name="flame" /></Tab>
              </TabBar>
              <ToolGrid>
                {TOOLS.map((t, i) => (
                  <ToolCell key={t} $active={i === 0}><Icon name={t} /></ToolCell>
                ))}
              </ToolGrid>
              <ColorPanel>
                <ColorRow>
                  <SwatchStack>
                    <Swatch $x={0} $y={2} $w={26} $h={21} $color="#fff" />
                    <Swatch $x={25} $y={25} $w={26} $h={22} $color="#c40000" />
                    <StackIcon $x={39} $y={10}><Icon name="swapColors" size={8} /></StackIcon>
                    <StackIcon $x={5} $y={33}><Icon name="resetColors" size={9} /></StackIcon>
                  </SwatchStack>
                  <div>
                    <BigSwatch $w={52} $h={44} $color="#c40000"><CenterDot /></BigSwatch>
                    <SizeSteps><span>-</span><span>+</span></SizeSteps>
                  </div>
                </ColorRow>
                <BrushRow>
                  <BrushGradient $w={52} $h={19} />
                  <BrushSize>1,00000pt</BrushSize>
                </BrushRow>
              </ColorPanel>
            </Toolbox>

            <CanvasPanel>
              <TabBar $h={43} $pad={8}>
                <DocTab $active>
                  *Synfig Animation 1
                  <CloseMark>✕</CloseMark>
                </DocTab>
              </TabBar>
              <ToolbarRow>
                <Toolbar>
                  <ToolIcons names={["doc", "open", "save", "saveAs", "saveAll"]} />
                  <ToolGap $w={12.5} />
                  <ToolIcons names={["undo", "redo"]} />
                  <ToolGap $w={14} />
                  <ToolIcons names={["clapper", "camera"]} />
                  <ToolGap $w={15.5} />
                  <ToolIcons names={["eye", "nodes", "ducks", "ring", "tangent", "pin"]} active={["eye", "ducks", "tangent"]} />
                  <ToolGap $w={13.5} />
                  <ToolIcons names={["grid", "gridSnap"]} />
                  <ToolGap $w={13.5} />
                  <ToolButton $w={28}><Icon name="refresh" size={17} /></ToolButton>
                  <PreviewButton>Preview <Caret /></PreviewButton>
                  <ToolGap $w={14.5} />
                  <ToolIcons names={["greenCam"]} />
                  <ToolGap $w={14} />
                  <ToolIcons names={["lowres"]} size={14} />
                  <ResolutionLabel>Низкое разрешение</ResolutionLabel>
                  <ToolIcons names={["hires"]} size={14} />
                  <ToolGap $w={13} />
                  <ToolIcons names={["onion"]} size={18} />
                  <SpinBox $ml={2}>
                    1
                    <SpinStep><Minus size={12} strokeWidth={3} /></SpinStep>
                    <SpinStep><Plus size={12} strokeWidth={3} /></SpinStep>
                  </SpinBox>
                  <SpinBox>
                    0
                    <SpinStep $dim><Minus size={12} strokeWidth={3} /></SpinStep>
                    <SpinStep><Plus size={12} strokeWidth={3} /></SpinStep>
                  </SpinBox>
                </Toolbar>
                <RecordSlot>
                  <ToolButton $w={16}><Icon name="stop" /></ToolButton>
                </RecordSlot>
              </ToolbarRow>
              <RulerRow>
                <RulerCorner>
                  <svg width="10" height="12" viewBox="0 0 10 12">
                    <path d="M2 1l5 5-5 5" fill="none" stroke="#e8e8e8" strokeWidth="2" />
                  </svg>
                </RulerCorner>
                <TopRuler />
              </RulerRow>
              <CanvasRow>
                <SideRuler><LeftRuler /></SideRuler>
                <Viewport>
                  <Artboard />
                  <ShapeLayer viewBox="0 0 1560 1110">
                    <rect x="55" y="43" width="1452" height="1002" fill="none" stroke="#333" strokeWidth="3" />
                    <path d={OUTLINE} fill="#000" stroke="#fff" strokeWidth="4.500" />
                    <path d={OUTLINE} fill="none" stroke="#111" strokeWidth="2.500" strokeDasharray="16 34" />
                    {HANDLES.map((h) => (
                      <g key={h.join()}>
                        <line x1={h[0]} y1={h[1]} x2={h[2]} y2={h[3]} stroke="#111" strokeWidth="3" />
                        <line x1={h[0]} y1={h[1]} x2={h[2]} y2={h[3]} stroke="#8fe0e0" strokeWidth="2" strokeDasharray="12 10" />
                      </g>
                    ))}
                    {YELLOW.map(([x, y]) => (
                      <circle key={`${x}-${y}`} cx={x} cy={y} r="12" fill="#b4ac00" stroke="#111" strokeWidth="3" />
                    ))}
                    {MAGENTA.map(([x, y]) => (
                      <circle key={`${x}-${y}`} cx={x} cy={y} r="12" fill="#b000b0" stroke="#111" strokeWidth="3" />
                    ))}
                    <circle cx="733" cy="445" r="11" fill="#00b000" stroke="#063" strokeWidth="1.500" />
                  </ShapeLayer>
                </Viewport>
                <VScroll $top={282}><Thumb $h={40} /></VScroll>
              </CanvasRow>
              <ZoomRow>
                <ZoomGroup>
                  <SmallButton><Icon name="zoomOut" size={15} /></SmallButton>
                  <Field>156,2%</Field>
                  <SmallButton><Icon name="zoomIn" size={15} /></SmallButton>
                  <SmallButton $w={26}><Icon name="zoomOne" size={15} /></SmallButton>
                  <SmallButton $w={30}><Icon name="zoomFit" size={15} /></SmallButton>
                </ZoomGroup>
                <ScrollTrack><Thumb $w={40} $h={6} /></ScrollTrack>
              </ZoomRow>
              <TransportRow>
                <SmallButton><Icon name="shield" /></SmallButton>
                <Field $color="#c80000">0f</Field>
                <SmallButton $w={1} />
                {["seekBegin", "prevKey", "prevFrame", "play", "nextFrame", "nextKey", "seekEnd"].map((n) => (
                  <SmallButton key={n}><Icon name={n} /></SmallButton>
                ))}
                <Field $pad={8}>120f</Field>
                <SmallButton $w={30}><Icon name="loop" /></SmallButton>
                {["boundLeft", "boundBoth", "boundRight"].map((n) => (
                  <SmallButton key={n} $w={29}><Icon name={n} /></SmallButton>
                ))}
                <SmallButton $w={27}><Icon name="dropper" /></SmallButton>
                <StatusText>УстановитьПараметр слоя (Новая Кривая016 Область):Цвет Успешно</StatusText>
                <InterpSelect>
                  <Icon name="diamond" />
                  <InterpName>Сгладить</InterpName>
                  <Caret />
                </InterpSelect>
                <WaypointButton><Icon name="waypointL" size={18} /></WaypointButton>
                <WaypointButton><Icon name="waypointR" size={18} /></WaypointButton>
                <RunnerSlot><Icon name="runner" size={18} /></RunnerSlot>
              </TransportRow>
            </CanvasPanel>
          </TopRow>

          <BottomRow>
            <ParamsPanel>
              <TabBar $h={38}>
                <Tab $active><Icon name="paramsTab" /></Tab>
                <Tab><Icon name="key" /></Tab>
              </TabBar>
              <ColumnHeader $h={28} $cols="150px 150px 26px 75px 1fr">
                <HeaderCell $first>Имя</HeaderCell>
                <HeaderCell>Значение</HeaderCell>
                <HeaderCell />
                <HeaderCell>Тип</HeaderCell>
                <HeaderCell>Дорожка</HeaderCell>
              </ColumnHeader>
              <ParamsBody>
                <ParamRows>
                  {PARAMS.map((p, i) => (
                    <ParamRow key={i}>
                      <ParamName $dim={p.dim}><Icon name={p.icon} size={15} /><span>{p.name}</span></ParamName>
                      <div>
                        {p.color ? <ColorValue /> : p.check ? (
                          <svg width="14" height="13" viewBox="0 0 14 13">
                            <path d="M1 7l3 4 9-10" fill="none" stroke="#fff" strokeWidth="2" />
                          </svg>
                        ) : p.value}
                      </div>
                      <ParamType>{p.type}</ParamType>
                      {p.track && <TrackMark />}
                    </ParamRow>
                  ))}
                </ParamRows>
                <VScroll $w={14} $top={3} $bg="#282d2f"><Thumb $h={90} /></VScroll>
              </ParamsBody>
              <BottomScroll $pad={4}><Thumb $w={355} /></BottomScroll>
            </ParamsPanel>

            <TimePanel>
              <TabBar $h={38} $pad={7}>
                {["shield", "curves", "library", "tag", "speaker"].map((n, i) => (
                  <Tab key={n} $active={i === 0} $dark={i === 1}><Icon name={n} /></Tab>
                ))}
              </TabBar>
              <TimeMain>
                <TimeColumn>
                  <BlueBand />
                  <GrayBand>
                    <CurrentFrame />
                    <TimeTicks />
                  </GrayBand>
                  <TrackArea />
                </TimeColumn>
                <VScroll $w={14} $top={4} $bg="#282d2f"><Thumb $h={108} /></VScroll>
              </TimeMain>
              <BottomScroll $pad={2}><Thumb $w={952} /></BottomScroll>
            </TimePanel>
          </BottomRow>
        </LeftArea>

        <RightArea>
          <PanelGroup $h={227} $sep>
            <TabBar $pad={8}>
              <Tab $active><Icon name="canvasTab" /></Tab>
              <Tab><Icon name="palette" /></Tab>
              <Tab><Icon name="compass" /></Tab>
              <Tab><Icon name="info" /></Tab>
            </TabBar>
            <TreeRow><Icon name="canvasTab" /> Synfig Animation 1</TreeRow>
          </PanelGroup>
          <PanelGroup $h={285} $sep>
            <TabBar $pad={8}>
              <Tab $active><Icon name="pointer" /></Tab>
              <Tab><Icon name="history" /></Tab>
            </TabBar>
            <ToolHelp>
              <HelpTitle>Инструмент трансформации</HelpTitle>
              <div>Ctrl вращает</div>
              <div>Alt меняет размер</div>
              <div>Shift включает ограничитель</div>
            </ToolHelp>
          </PanelGroup>
          <PanelGroup>
            <TabBar $h={35} $pad={8}>
              <Tab $active><Icon name="layersTab" /></Tab>
              <Tab><Icon name="setsTab" /></Tab>
            </TabBar>
            <ColumnHeader $cols="23px 63px 199px 1fr">
              <HeaderCell $first />
              <HeaderCell>Символ</HeaderCell>
              <HeaderCell>Имя</HeaderCell>
              <HeaderCell>Глубина Z</HeaderCell>
            </ColumnHeader>
            <div>
              {LAYERS.map((l) => (
                <LayerRow key={l.name} $selected={l.selected}>
                  <CheckBox>
                    <svg width="12" height="11" viewBox="0 0 12 11">
                      <path d="M1 6l3 3 7-8" fill="none" stroke="#fff" strokeWidth="2.400" />
                    </svg>
                  </CheckBox>
                  <LayerSymbol><Icon name={l.icon} /></LayerSymbol>
                  <LayerCell>{l.name}</LayerCell>
                  <LayerCell>{l.z}</LayerCell>
                </LayerRow>
              ))}
            </div>
            <Spacer />
            <LayerToolbar>
              <LayerButton><Icon name="plusRed" /></LayerButton>
              <LayerGap $w={13.5} />
              <LayerButton><Icon name="up" /></LayerButton>
              <LayerButton><Icon name="down" /></LayerButton>
              <LayerGap $w={14} />
              <LayerButton><Icon name="encap" /></LayerButton>
              <LayerButton><Icon name="folder" /></LayerButton>
              <LayerButton><Icon name="folderGo" /></LayerButton>
              <LayerButton><Icon name="del" /></LayerButton>
              <LayerGap $w={14} />
              <LayerButton><Icon name="cutSmall" /></LayerButton>
              <LayerButton><Icon name="copy" /></LayerButton>
              <LayerButton><Icon name="paste" /></LayerButton>
            </LayerToolbar>
          </PanelGroup>
        </RightArea>
      </Body>

      <Tooltip>Меню окна</Tooltip>

      <Overlay width="1920" height="1045">
        <rect x="493" y="97" width="187" height="39" fill="none" stroke="#f00000" strokeWidth="4" />
        <line x1="651" y1="368" x2="594" y2="155" stroke="#e8141e" strokeWidth="3.500" />
        <polygon points="589,140 581,162 602,157" fill="#e8141e" />
      </Overlay>
    </Page>
  );
}
